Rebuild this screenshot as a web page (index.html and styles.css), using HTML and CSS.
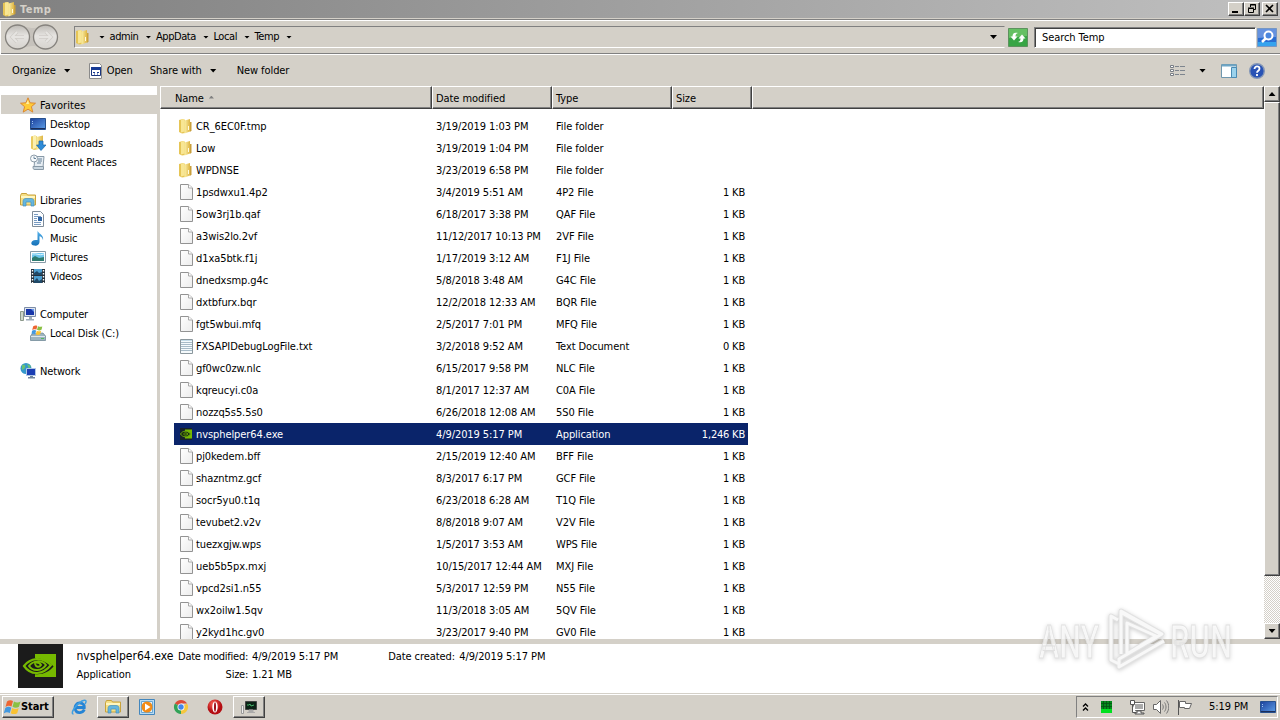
FILE: index.html
```html
<!DOCTYPE html>
<html lang="en">
<head>
<meta charset="utf-8">
<title>Temp</title>
<link rel="stylesheet" href="styles.css">
</head>
<body>
<svg class="defs" width="0" height="0">
<defs>
<linearGradient id="gFold" x1="0" x2="1"><stop offset="0" stop-color="#fbefa6"/><stop offset="1" stop-color="#deb544"/></linearGradient>
<linearGradient id="gBlue" x1="0" y1="0" x2="1" y2="1"><stop offset="0" stop-color="#1b3f9c"/><stop offset="1" stop-color="#5d9fe8"/></linearGradient>
<linearGradient id="gSea" x1="0" y1="0" x2="0" y2="1"><stop offset="0" stop-color="#58b5ee"/><stop offset="1" stop-color="#1471b8"/></linearGradient>
<linearGradient id="gPage" x1="0" y1="0" x2="1" y2="1"><stop offset="0" stop-color="#fff"/><stop offset="1" stop-color="#ececec"/></linearGradient>
<linearGradient id="gRound" x1="0" y1="0" x2="0" y2="1"><stop offset="0" stop-color="#bdbab5"/><stop offset=".45" stop-color="#e6e4e1"/><stop offset="1" stop-color="#d6d3ce"/></linearGradient>
<radialGradient id="gRed" cx=".4" cy=".3"><stop offset="0" stop-color="#ff6a5a"/><stop offset="1" stop-color="#b40d12"/></radialGradient>
</defs>
<symbol id="folder" viewBox="0 0 16 16"><path d="M1 2l4-1 2 1v13l-3 .5L1 14z" fill="#e6c556"/><path d="M3 1.500L6.500 1v12.500L3 14.500z" fill="#f8e694"/><path d="M6.500 2.500L12 1v12.500l-5.500 2z" fill="url(#gFold)"/><path d="M12 4h1.500v8.500L12 14z" fill="#c99f3c"/><path d="M10.500 8v4" stroke="#fffbe0"/></symbol>
<symbol id="page" viewBox="0 0 16 16"><path d="M2.500.5h8l4 3.500v11.500h-12z" fill="url(#gPage)" stroke="#939393"/><path d="M10.500.5V4h4" fill="#fff" stroke="#a8a8a8"/></symbol>
<symbol id="text" viewBox="0 0 16 16"><path d="M2.500 1.500h12v14h-12z" fill="#f5fafc" stroke="#8b979d"/><path d="M3 4.500h11M3 6.500h11M3 8.500h11M3 10.500h11M3 12.500h11" stroke="#a7bbc8"/><path d="M3 2.500h11" stroke="#c5dce8"/></symbol>
<symbol id="nv" viewBox="0 0 45 45"><path d="M0 0h45v45H0z" fill="#1b1b1b"/><path d="M17 10h21v23H17z" fill="#76b900"/><path d="M4 22c5-9 12-10 19-9 6 1 10 4 13 9-8 10-23 12-32 0z" fill="#1b1b1b"/><path d="M17 10h21v23H26c5-2 8-5 11-9-4-5-9-9-20-10z" fill="#76b900"/><path d="M6 22c6-8 18-10 27-1-8 10-20 11-27 1z" fill="none" stroke="#76b900" stroke-width="2.200"/><path d="M11 22c4-6 13-6 17-1-4 6-13 7-17 1z" fill="none" stroke="#76b900" stroke-width="2"/><path d="M16 19c4-1 6 0 7 2-2 3-5 2-6-1" fill="none" stroke="#76b900" stroke-width="2"/></symbol>
<symbol id="nvs" viewBox="0 0 16 16"><path d="M2 2h12v12H2z" fill="#17202a"/><path d="M7 3.500h7v9H7z" fill="#76b900"/><path d="M2.500 8c2-3.500 7-4 10 0-3 4-8 3.500-10 0z" fill="#1b2b12" stroke="#6aa50c"/><path d="M5.500 8c1-1.500 3.500-1.500 4.500 0-1 1.500-3.500 1.500-4.500 0z" fill="none" stroke="#76b900" stroke-width=".8"/></symbol>
<symbol id="star" viewBox="0 0 16 16"><path d="M8 .8l2.100 5 5.400.4-4.100 3.500 1.400 5.400L8 12.200l-4.800 2.900 1.400-5.400L.5 6.200l5.400-.4z" fill="#ffcb38" stroke="#d9812b" stroke-width=".9"/><path d="M8 3l1 4H6z" fill="#fff0a5"/></symbol>
<symbol id="desktop" viewBox="0 0 16 16"><path d="M.5 2.500h15v11H.5z" fill="url(#gBlue)" stroke="#27508e"/><path d="M1 12.500h14" stroke="#1c2e59"/><path d="M2 5.500h1M2 7.500h1" stroke="#9ec6ee"/></symbol>
<symbol id="down" viewBox="0 0 16 16"><path d="M1 1.500L5 .5l2 1v13l-3 .5-3-1.500z" fill="#eacb5f"/><path d="M3 1l3-.5V13l-3 1z" fill="#fbf0b0"/><path d="M6.500 2L13 .5V12l-6.500 3z" fill="url(#gFold)"/><path d="M9 6h4v4h3l-5 5.500L6.500 10H9z" fill="#2d8bd8" stroke="#1765a6" stroke-width=".7"/></symbol>
<symbol id="recent" viewBox="0 0 16 16"><path d="M5 2.500h9l-1 11H4z" fill="#e6edf3" stroke="#8899a7"/><path d="M3 12.500h10.500v3H5c-2 0-2-1-2-3z" fill="#c9d6e0" stroke="#8899a7"/><circle cx="4" cy="4.500" r="3.500" fill="#f8fbfd" stroke="#8c9ba8"/><path d="M4 2.500v2h2M8 5h4M8 7h4M7 9h4" stroke="#668198" fill="none"/></symbol>
<symbol id="lib" viewBox="0 0 16 16"><path d="M.5 3.500l1-2h5l1 1.500h8v10H.5z" fill="#f5df86" stroke="#c9a23b"/><path d="M1 5h14" stroke="#fff6c0" stroke-width="2"/><path d="M3 9.500c0-2 1-3 3-3h5c2 0 3 1 3 3v4.500h-3v-4H6v4H3z" fill="#65b6df" stroke="#4690bd" stroke-width=".7"/></symbol>
<symbol id="doc" viewBox="0 0 16 16"><path d="M2.500.5h8l3 3v12h-11z" fill="#fbfdff" stroke="#7f8c99"/><path d="M4 3.500h4M4 5.500h7M4 7.500h3M4 9.500h3M4 11.500h7M4 13.500h7" stroke="#799bc1"/><path d="M8 6h4v4H8z" fill="#2e64a5"/></symbol>
<symbol id="music" viewBox="0 0 16 16"><path d="M7.500.5c.5 3 6.500 4 5.500 9.500-.7-2.500-2-3.500-3.500-3.700V12c0 2.800-2.700 4-5.200 3.600C-.6 15 1 10.200 5.500 10l2 .1V.5z" fill="url(#gSea)"/></symbol>
<symbol id="pic" viewBox="0 0 16 16"><path d="M.5 2.500h15v11H.5z" fill="#fff" stroke="#879ba7"/><path d="M2 4h12v8H2z" fill="#6fc6ec"/><path d="M2 9l3-2 4 2 5-1v4H2z" fill="#2e7c70"/><path d="M2 5c5-1 7 2 12 0" stroke="#d9f4ff" fill="none"/></symbol>
<symbol id="video" viewBox="0 0 16 16"><path d="M1 1h14v14H1z" fill="#26323d"/><path d="M4 1h8v6H4zM4 8h8v7H4z" fill="#4d9fd1"/><path d="M4 5l3-2 2 2 3-1v3H4zM4 13l3-3 2 3 3-2v4H4z" fill="#204967"/><path d="M2.500 2v13M13.500 2v13" stroke="#fff" stroke-width="1.400" stroke-dasharray="1.500 1.500"/></symbol>
<symbol id="pc" viewBox="0 0 16 16"><path d="M.5 5.500h3v9h-3z" fill="#cdd5ca" stroke="#8c998b"/><path d="M4.500 1.500h11v9h-11z" fill="#dfe6ef" stroke="#7c8ca7"/><path d="M6 3h8v6H6z" fill="#1836a9"/><path d="M11 3h3v3z" fill="#6897ea"/><path d="M9 11h3v2H9zM6 13h8v1.500H6z" fill="#9eacb9"/></symbol>
<symbol id="win" viewBox="0 0 16 16"><path d="M2.500 2.500C4.500 1 6.500 1 8.500 2L7 7.500C5 6.500 3 6.500 1 8z" fill="#ed6532"/><path d="M9.500 2.500c2 1.200 4.500 1.200 6.500 0l-1.500 5.300c-2 1.300-4.500 1.200-6.500 0z" fill="#8ac043"/><path d="M.8 9c2-1.500 4-1.500 6-.3L5.300 14C3.300 13 1.300 13-.7 14.300z" fill="#4298df"/><path d="M7.700 9c2 1.200 4.500 1.300 6.500 0l-1.500 5.200c-2 1.200-4.500 1.200-6.500 0z" fill="#fac232"/></symbol>
<symbol id="disk" viewBox="0 0 16 16"><path d="M2 9l11-1 2.500 3v4.500H.5V11z" fill="#9db3bf" stroke="#66808f" stroke-width=".7"/><path d="M1 11.500h14" stroke="#dce7ec"/><path d="M11 13.500h3" stroke="#54b95c"/><use href="#win" x="1.500" y="-.5" width="11" height="11"/></symbol>
<symbol id="net" viewBox="0 0 16 16"><circle cx="6" cy="5.500" r="5.500" fill="#3598cb"/><path d="M2 2c4-1 4 2 2 4l-2 1zM7 1l4 2-2 3z" fill="#6ac273"/><path d="M6.500 5.500h9v7h-9z" fill="#1b3eb4" stroke="#b2c8e5"/><path d="M10 13h3v1h2v1.500H8V14h2z" fill="#71869d"/></symbol>
<symbol id="app" viewBox="0 0 16 16"><path d="M1.500.5h10l2 2v13h-12z" fill="#fff" stroke="#8a8a8a"/><path d="M3.500 5.500h9v7h-9z" fill="#fff" stroke="#19347d"/><path d="M3 4h10v3H3z" fill="#173a94"/><path d="M5 9.500h2M9 9.500h2M6 11h1M9 11h1" stroke="#173a94"/></symbol>
<symbol id="refresh" viewBox="0 0 20 19"><path d="M.5.5h19v18H.5z" fill="#38a545" stroke="#5d925e"/><path d="M1 1h18v7L1 10z" fill="#65c063"/><path d="M2.500 8.500l3.500 4 3.500-4H7.500c0-2 .5-3 2.500-3.500-4-1-5.500.5-5.500 3.500z" fill="#fff"/><path d="M17.500 10.500l-3.500-4-3.500 4h2c0 2-.5 3-2.500 3.500 4 1 5.500-.5 5.500-3.500z" fill="#fff"/></symbol>
<symbol id="search" viewBox="0 0 20 19"><path d="M.5.5h19v18H.5z" fill="#286cd2" stroke="#7797c3"/><path d="M1 1h18v8L1 10z" fill="#6592df"/><path d="M1 14h18v4H1z" fill="#35a3ee"/><circle cx="11.500" cy="7.500" r="4" fill="#4b87de" stroke="#fff" stroke-width="2"/><path d="M8.500 10.500L5 14" stroke="#fff" stroke-width="2.500"/></symbol>
<symbol id="ie" viewBox="0 0 16 16"><path d="M13.300 10.500C12 14 6 15 4.500 11S6 3.500 9.300 4c3 .3 4.300 2.300 4 4.500H5" fill="none" stroke="#2584d5" stroke-width="2.800"/><path d="M2.500 15C-1 15 4 6 11 2c4-2 5 0 3 3" fill="none" stroke="#3f9fe2" stroke-width="1.500"/></symbol>
<symbol id="wmp" viewBox="0 0 16 16"><path d="M.5.500h15v15H.5z" fill="#b8dbf3" stroke="#4386bd"/><path d="M2.500 2.500h11v11h-11z" fill="#e7f3fa" stroke="#68a6d2"/><circle cx="8" cy="8" r="5.500" fill="#f28b16"/><path d="M6 4.500l5.500 3.500L6 11.500z" fill="#fff"/></symbol>
<symbol id="chrome" viewBox="0 0 16 16"><path d="M8 8L1.900 4.500A7 7 0 0 1 14.100 4.500H8z" fill="#dc4a38"/><path d="M8 8l6.100-3.500A7 7 0 0 1 8 15z" fill="#f5c73e"/><path d="M8 8v7A7 7 0 0 1 1.900 4.500z" fill="#32a257"/><circle cx="8" cy="8" r="3.500" fill="#fff"/><circle cx="8" cy="8" r="2.700" fill="#4286eb"/></symbol>
<symbol id="opera" viewBox="0 0 16 16"><circle cx="8" cy="8" r="7.500" fill="url(#gRed)"/><ellipse cx="8" cy="8" rx="2.700" ry="5.500" fill="#fff"/><ellipse cx="8" cy="8" rx="1" ry="4.700" fill="#9c1018"/></symbol>
<symbol id="term" viewBox="0 0 16 16"><path d="M.5 6.500h2v8h-2z" fill="#eee" stroke="#9a9a9a"/><path d="M4.500 2.500h11v8h-11z" fill="#0b2316" stroke="#444"/><path d="M6 6h2l1-1 1 2 3-1" stroke="#46b46a" fill="none"/><path d="M8 11h4v2H8zM6 13.500h8" fill="#aaa" stroke="#aaa"/></symbol>
</svg>

<div class="screen">
  <header class="titlebar">
    <svg class="ic"><use href="#folder"/></svg><span class="title">Temp</span>
    <div class="winbtns">
      <span class="wb"><svg width="14" height="12"><path d="M3 9h6" stroke="#000" stroke-width="2"/></svg></span>
      <span class="wb"><svg width="14" height="12"><path d="M5.500 4V1.500h5v5H9M5 2h6M3.500 5.500h5v4h-5zM3 5h6" fill="none" stroke="#000"/></svg></span>
      <span class="wb gap"><svg width="14" height="12"><path d="M3 2l7 7M10 2L3 9" stroke="#000" stroke-width="1.600"/></svg></span>
    </div>
  </header>

  <div class="navbar">
    <svg class="rounds" width="58" height="28"><path d="M15 2c14 4 14 4 28 0v24c-14-4-14-4-28 0z" fill="#c6c2bc"/><circle cx="13.500" cy="14" r="12" fill="url(#gRound)" stroke="#86837e" stroke-width="1.300"/><circle cx="41.500" cy="14" r="12" fill="url(#gRound)" stroke="#86837e" stroke-width="1.300"/><path d="M20 14H8m5-5l-5 5 5 5M35 14h12m-5-5l5 5-5 5" fill="none" stroke="#cfccc7" stroke-width="3.400"/><path d="M20 14H8m5-5l-5 5 5 5M35 14h12m-5-5l5 5-5 5" fill="none" stroke="#e6e4e1" stroke-width="2"/></svg>
    <div class="address">
      <svg class="ic"><use href="#folder"/></svg>
      <i class="tri s t0"></i><span>admin</span><i class="tri s"></i><span>AppData</span><i class="tri s"></i><span>Local</span><i class="tri s"></i><span>Temp</span><i class="tri s"></i>
      <i class="tri end"></i>
    </div>
    <svg class="refresh" width="20" height="19"><use href="#refresh"/></svg>
    <div class="searchbox"><span>Search Temp</span></div>
    <svg class="sbtn" width="20" height="19"><use href="#search"/></svg>
  </div>

  <div class="toolbar">
    <span>Organize</span><i class="tri"></i>
    <svg class="ic open"><use href="#app"/></svg><span>Open</span>
    <span class="share">Share with</span><i class="tri"></i>
    <span class="newf">New folder</span>
    <div class="tright">
      <svg width="16" height="14"><path d="M.5 1.500h3v2h-3zM.5 5.500h3v2h-3zM.5 9.500h3v2h-3z" fill="#fff" stroke="#777d85"/><path d="M5 2.500h4M10 2.500h5M5 6.500h4M10 6.500h5M5 10.500h4M10 10.500h5" stroke="#7e858e"/></svg>
      <i class="tri"></i>
      <svg width="17" height="14"><path d="M.5.500h15v13H.5z" fill="#fff" stroke="#6f97ae"/><path d="M1 1.500h14" stroke="#6fa6c6" stroke-width="2"/><path d="M10.500 3.500h5v10h-5z" fill="#9bd2ec" stroke="#4a8bb3"/></svg>
      <svg width="16" height="16"><circle cx="8" cy="8" r="7.300" fill="#2852b5" stroke="#8497b7" stroke-width="1.400"/><path d="M5.500 6c0-3.500 5-3.200 5-.3 0 2-2.500 2-2.500 4M8 11v2" fill="none" stroke="#fff" stroke-width="1.800"/></svg>
    </div>
  </div>

  <main class="content">
    <nav class="side" id="side"></nav>
    <section class="list">
      <div class="cols"><span class="c1">Name <i class="sort"></i></span><span class="c2">Date modified</span><span class="c2">Type</span><span class="c3">Size</span><span class="c4"></span></div>
      <div class="rows" id="rows"></div>
    </section>
    <div class="scroll"><span class="sb"><i class="tri up"></i></span><span class="thumb"></span><span class="track"></span><span class="sb"><i class="tri"></i></span></div>
  </main>

  <footer class="details">
    <svg width="45" height="44"><use href="#nv" width="45" height="45"/></svg>
    <div class="d1"><b>nvsphelper64.exe</b><span>Application</span></div>
    <div class="d2"><span>Date modified:</span><span>4/9/2019 5:17 PM</span><span>Size:</span><span>1.21 MB</span></div>
    <div class="d3"><span>Date created:</span><span>4/9/2019 5:17 PM</span></div>
  </footer>

  <div class="taskbar">
    <div class="start"><svg width="17" height="16"><use href="#win"/></svg><span>Start</span></div>
    <span class="task"><svg class="ic"><use href="#ie"/></svg></span>
    <span class="task on"><svg class="ic"><use href="#lib"/></svg></span>
    <span class="task"><svg class="ic"><use href="#wmp"/></svg></span>
    <span class="task"><svg class="ic"><use href="#chrome"/></svg></span>
    <span class="task"><svg class="ic"><use href="#opera"/></svg></span>
    <span class="task on"><svg class="ic"><use href="#term"/></svg></span>
    <div class="tray">
      <svg width="7" height="9"><path d="M1 3.500L3.500 1 6 3.500M1 7.500L3.500 5 6 7.500" fill="none" stroke="#000" stroke-width="1.300"/></svg>
      <svg class="g" width="11" height="12"><path d="M0 0h11v12H0z" fill="#00e020"/><path d="M0 0h11v8H0z" fill="#048a1c"/><path d="M0 2.500h11M0 5.500h11M2.500 0v8M5.500 0v8M8.500 0v8" stroke="#045212" stroke-width=".8"/></svg>
      <svg class="n" width="16" height="16"><path d="M4.500 3.500h11v8h-11z" fill="#fff" stroke="#666"/><path d="M6 5h8v5H6z" fill="#aaa"/><path d="M8 12h4v2h3v1H6v-1h2zM1.500 1.500h4v4h-4zM3.500 5v8.500H7" fill="#fff" stroke="#555"/></svg>
      <svg class="v" width="16" height="16"><path d="M.5 5.500h3l4-4v13l-4-4h-3z" fill="#fff" stroke="#666"/><path d="M9.500 5.500c1 1.500 1 3.500 0 5M11.500 3.500c2 2.500 2 6.500 0 9M13.500 1.500c3 4 3 9 0 13" fill="none" stroke="#777"/></svg>
      <svg class="f" width="16" height="16"><path d="M1.500 1v15" stroke="#555"/><path d="M2.500 2.500h6v2h6l-2 5h-5v-1h-5z" fill="#fff" stroke="#666"/></svg>
      <span class="clock">5:19 PM</span>
      <svg class="ic m"><use href="#desktop"/></svg>
    </div>
  </div>

  <svg class="mark" width="206" height="76" viewBox="0 0 206 76">
    <g fill="#fff" fill-opacity=".7" stroke="#e0e0e0" stroke-width=".9">
      <text x="5" y="55" textLength="60" lengthAdjust="spacingAndGlyphs">ANY</text>
      <text x="136" y="55" textLength="62" lengthAdjust="spacingAndGlyphs">RUN</text>
    </g>
    <g fill="none" stroke-linejoin="round">
      <path d="M84 17l-7-4v44l8 4M87 51V8l41 23-43 25v8l45-26M93 20v31l29-18zM86 9l42 23" stroke="#e2e2e2" stroke-width="5"/>
      <path d="M84 17l-7-4v44l8 4M87 51V8l41 23-43 25v8l45-26M93 20v31l29-18zM86 9l42 23" stroke="#f8f8f8" stroke-width="3"/>
    </g>
  </svg>
</div>
<script src="app.js"></script>
</body>
</html>
```

FILE: styles.css
```css
* { box-sizing: border-box; }
body { margin: 0; background: #d4d0c8; }
.defs { position: absolute; }
svg { display: block; flex: none; }
.screen {
  position: relative; width: 1280px; height: 720px; overflow: hidden;
  display: flex; flex-direction: column; background: #d4d0c8; color: #000;
  font: 11px/14px Tahoma, "DejaVu Sans Condensed", "DejaVu Sans", sans-serif;
  font-stretch: condensed; letter-spacing: -.08px; white-space: nowrap;
}
.ic { width: 16px; height: 16px; }
.tri { flex: none; width: 7px; height: 4px; background: #000; clip-path: polygon(0 0, 100% 0, 50% 100%); }
.tri.s { width: 6px; height: 3px; margin: 0 5px 0 7px; }
.tri.up { transform: scaleY(-1); }

.titlebar { height: 18px; display: flex; align-items: center; padding: 0 2px; background: linear-gradient(90deg, #808080, #c0c0c0); }
.title { margin-left: 2px; padding-top: 1px; color: #d4d0c8; font-weight: bold; letter-spacing: .5px; }
.winbtns { margin-left: auto; display: flex; }
.wb { width: 16px; height: 14px; background: #d4d0c8; border: 1px solid; border-color: #fff #404040 #404040 #fff; box-shadow: inset -1px -1px #808080; }
.wb.gap { margin-left: 2px; }

.navbar { height: 36px; margin-top: 1px; display: flex; align-items: center; border-top: 1px solid #808080; border-bottom: 1px solid #fff; box-shadow: inset 0 1px #fff, inset 1px 0 #fff, inset 0 -1px #808080; padding-left: 4px; }
.address { width: 931px; height: 22px; margin-left: 12px; display: flex; align-items: center; border: 1px solid; border-color: #808080 #d4d0c8 #fff #808080; letter-spacing: -.42px; }
.address .tri.s { margin-right: 4.500px; }
.address .tri.t0 { margin-left: 8px; }
.address .tri.end { margin-left: auto; margin-right: 7px; }
.refresh { margin-left: 3px; }
.searchbox { width: 222px; height: 21px; margin-left: 6px; padding: 3px 7px; background: #fff; border: 1px solid; border-color: #808080 #fff #fff #808080; box-shadow: inset 1px 1px #404040; }
.sbtn { margin-left: 1px; }

.toolbar { height: 31px; display: flex; align-items: center; padding-left: 12px; }
.toolbar .tri { margin-left: 8px; }
.toolbar .open { margin: 0 3px 0 17px; }
.toolbar .share { margin-left: 17px; }
.newf { margin-left: 20px; }
.tright { margin-left: auto; margin-right: 15px; display: flex; align-items: center; }
.tright .tri { margin-left: 13px; margin-right: 15px; }
.tright svg + svg { margin-left: 11px; }

.content { height: 553px; display: flex; }
.side { width: 160px; padding: 9px 0 0 1px; background: #fff; border-right: 3px solid #d4d0c8; letter-spacing: -.15px; }
.side div { height: 19px; display: flex; align-items: center; padding-left: 29px; }
.side div.top { padding-left: 19px; }
.side div.sel { background: #d4d0c8; letter-spacing: .1px; }
.side div span { margin-left: 4px; padding-top: 2px; }
.list { width: 1104px; background: #fff; display: flex; flex-direction: column; overflow: hidden; }
.cols { height: 23px; flex: none; display: flex; background: #d4d0c8; }
.cols > span { display: flex; align-items: center; padding: 2px 0 0 3px; border: 1px solid; border-color: #fff #404040 #404040 #fff; box-shadow: inset -1px -1px #808080; }
.cols > .c1 { width: 272px; padding-left: 14px; }
.cols .c2 { width: 120px; }
.cols .c3 { width: 80px; }
.cols .c4 { flex: 1; }
.sort { width: 5px; height: 3px; margin: -3px 0 0 5px; background: #808080; clip-path: polygon(50% 0, 100% 100%, 0 100%); }
.rows { padding-top: 6px; }
.row { width: 574px; height: 22px; margin-left: 14px; padding: 0 3px 0 4px; display: grid; grid-template-columns: 18px 240px 120px 1fr auto; align-items: center; }
.row span { padding-top: 2px; }
.row span:last-child { letter-spacing: -.2px; }
.row svg { margin-bottom: 1px; }
.row.sel { background: #0a246a; color: #fff; }
.scroll { width: 16px; display: flex; flex-direction: column; }
.sb, .thumb { flex: none; background: #d4d0c8; border: 1px solid; border-color: #fff #404040 #404040 #fff; box-shadow: inset -1px -1px #808080; }
.sb { height: 16px; display: grid; place-items: center; }
.thumb { height: 474px; }
.track { flex: 1; background: repeating-conic-gradient(#fff 0 25%, #d4d0c8 0 50%) 0 0 / 2px 2px; }

.details { height: 49px; margin-top: 5px; display: flex; background: #fff; padding-left: 18px; }
.details .d1 { width: 101px; margin-left: 13px; display: flex; flex-direction: column; padding: 5px 0 0 .5px; gap: 4px; }
.details b { font-weight: normal; font-size: 12px; line-height: 15px; letter-spacing: .03px; }
.d2, .d3 { display: grid; grid-template-columns: 70px auto; column-gap: 4px; row-gap: 4px; align-content: start; padding: 6px 0 0 1px; }
.d2 span:nth-child(odd) { text-align: right; letter-spacing: -.25px; }
.d3 { grid-template-columns: 67px auto; margin-left: 49px; }

.taskbar { flex: 1; display: flex; align-items: center; padding: 0 2px; border-top: 1px solid #d4d0c8; box-shadow: inset 0 1px #fff; }
.start, .task.on { border: 1px solid; border-color: #fff #404040 #404040 #fff; box-shadow: inset -1px -1px #808080; }
.start { width: 52px; height: 22px; display: flex; align-items: center; padding-left: 1px; font-weight: bold; margin-right: 9px; letter-spacing: -.1px; }
.task { width: 32px; height: 22px; margin-right: 2px; display: grid; place-items: center; }
.tray { width: 202px; height: 22px; margin-left: auto; padding-left: 5px; display: flex; align-items: center; border: 1px solid; border-color: #808080 #fff #fff #808080; }
.tray .g { margin-left: 12px; }
.tray .n { margin-left: 17px; }
.tray .v, .tray .f { margin-left: 8px; }
.clock { width: 51px; margin-left: 16px; }
.mark { position: absolute; left: 1034px; top: 603px; font: 500 46px Roboto, "Liberation Sans", sans-serif; letter-spacing: 0; filter: drop-shadow(0 1px 2px rgba(0, 0, 0, .2)); }
```

FILE: app.js
```js
const places = [
  ['star', 'Favorites', 'top sel'], ['desktop', 'Desktop'], ['down', 'Downloads'], ['recent', 'Recent Places'], null,
  ['lib', 'Libraries', 'top'], ['doc', 'Documents'], ['music', 'Music'], ['pic', 'Pictures'], ['video', 'Videos'], null,
  ['pc', 'Computer', 'top'], ['disk', 'Local Disk (C:)'], null, ['net', 'Network', 'top']
];
document.getElementById('side').innerHTML = places.map(p => p
  ? `<div class="${p[2] || ''}"><svg class="ic"><use href="#${p[0]}"/></svg><span>${p[1]}</span></div>`
  : '<div></div>').join('');

const files = `CR_6EC0F.tmp|3/19/2019 1:03 PM|File folder|
Low|3/19/2019 1:04 PM|File folder|
WPDNSE|3/23/2019 6:58 PM|File folder|
1psdwxu1.4p2|3/4/2019 5:51 AM|4P2 File|1 KB
5ow3rj1b.qaf|6/18/2017 3:38 PM|QAF File|1 KB
a3wis2lo.2vf|11/12/2017 10:13 PM|2VF File|1 KB
d1xa5btk.f1j|1/17/2019 3:12 AM|F1J File|1 KB
dnedxsmp.g4c|5/8/2018 3:48 AM|G4C File|1 KB
dxtbfurx.bqr|12/2/2018 12:33 AM|BQR File|1 KB
fgt5wbui.mfq|2/5/2017 7:01 PM|MFQ File|1 KB
FXSAPIDebugLogFile.txt|3/2/2018 9:52 AM|Text Document|0 KB
gf0wc0zw.nlc|6/15/2017 9:58 PM|NLC File|1 KB
kqreucyi.c0a|8/1/2017 12:37 AM|C0A File|1 KB
nozzq5s5.5s0|6/26/2018 12:08 AM|5S0 File|1 KB
nvsphelper64.exe|4/9/2019 5:17 PM|Application|1,246 KB
pj0kedem.bff|2/15/2019 12:40 AM|BFF File|1 KB
shazntmz.gcf|8/3/2017 6:17 PM|GCF File|1 KB
socr5yu0.t1q|6/23/2018 6:28 AM|T1Q File|1 KB
tevubet2.v2v|8/8/2018 9:07 AM|V2V File|1 KB
tuezxgjw.wps|1/5/2017 3:53 AM|WPS File|1 KB
ueb5b5px.mxj|10/15/2017 12:44 AM|MXJ File|1 KB
vpcd2si1.n55|5/3/2017 12:59 PM|N55 File|1 KB
wx2oilw1.5qv|11/3/2018 3:05 AM|5QV File|1 KB
y2kyd1hc.gv0|3/23/2017 9:40 PM|GV0 File|1 KB`.split('\n').map(l => l.split('|'));
const iconFor = f => f[2] === 'File folder' ? 'folder' : f[2] === 'Text Document' ? 'text' : f[2] === 'Application' ? 'nvs' : 'page';
document.getElementById('rows').innerHTML = files.map(f =>
  `<div class="row ${f[2] === 'Application' ? 'sel' : ''}"><svg class="ic"><use href="#${iconFor(f)}"/></svg><span>${f[0]}</span><span>${f[1]}</span><span>${f[2]}</span><span>${f[3]}</span></div>`).join('');
```
